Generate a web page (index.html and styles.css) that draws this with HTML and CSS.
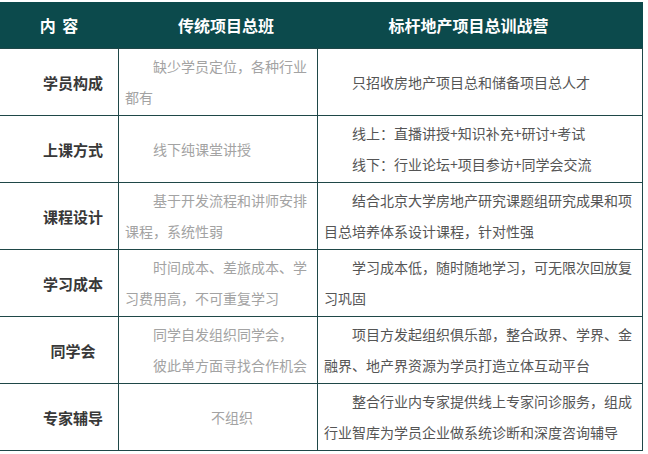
FILE: index.html
```html
<!DOCTYPE html>
<html lang="zh">
<head>
<meta charset="utf-8">
<link rel="stylesheet" href="styles.css">
</head>
<body>
<div class="table">
  <div class="head">
    <div class="hcell h1">内 容</div>
    <div class="hcell h2">传统项目总班</div>
    <div class="hcell h3">标杆地产项目总训战营</div>
  </div>
  <div class="grid">
    <div class="cell c1">学员构成</div>
    <div class="cell c2"><p>缺少学员定位，各种行业都有</p></div>
    <div class="cell c3"><p>只招收房地产项目总和储备项目总人才</p></div>

    <div class="cell c1">上课方式</div>
    <div class="cell c2"><p>线下纯课堂讲授</p></div>
    <div class="cell c3"><p>线上：直播讲授+知识补充+研讨+考试</p><p>线下：行业论坛+项目参访+同学会交流</p></div>

    <div class="cell c1">课程设计</div>
    <div class="cell c2"><p>基于开发流程和讲师安排课程，系统性弱</p></div>
    <div class="cell c3"><p>结合北京大学房地产研究课题组研究成果和项目总培养体系设计课程，针对性强</p></div>

    <div class="cell c1">学习成本</div>
    <div class="cell c2"><p>时间成本、差旅成本、学习费用高，不可重复学习</p></div>
    <div class="cell c3"><p>学习成本低，随时随地学习，可无限次回放复习巩固</p></div>

    <div class="cell c1">同学会</div>
    <div class="cell c2"><p>同学自发组织同学会，</p><p>彼此单方面寻找合作机会</p></div>
    <div class="cell c3"><p>项目方发起组织俱乐部，整合政界、学界、金融界、地产界资源为学员打造立体互动平台</p></div>

    <div class="cell c1">专家辅导</div>
    <div class="cell c2 center"><p>不组织</p></div>
    <div class="cell c3"><p>整合行业内专家提供线上专家问诊服务，组成行业智库为学员企业做系统诊断和深度咨询辅导</p></div>
  </div>
</div>
</body>
</html>
```

FILE: styles.css
```css
html, body {
  margin: 0;
  padding: 0;
  background: #ffffff;
}
body {
  padding-top: 2px;
  font-family: "Microsoft YaHei", "Noto Sans CJK SC", sans-serif;
}
.table {
  width: 643px;
}
.head {
  display: grid;
  grid-template-columns: 118px 200px 325px;
  height: 46px;
  background: #0c4a4c;
  color: #ffffff;
  font-size: 16px;
  font-weight: bold;
}
.hcell {
  display: flex;
  align-items: center;
  justify-content: center;
}
.h1 { word-spacing: 3px; }
.h2 { padding-left: 16px; }
.h3 { padding-right: 24px; }
.grid {
  display: grid;
  grid-template-columns: 118px 198px 324px;
  grid-auto-rows: 66px;
  gap: 1px;
  background: #1f4748;
  border-top: 1px solid #1f4748;
  border-right: 1px solid #1f4748;
  border-bottom: 1px solid #1f4748;
}
.cell {
  background: #ffffff;
  padding: 0 6px;
  display: flex;
  flex-direction: column;
  justify-content: center;
  font-size: 14px;
  line-height: 31px;
}
.cell p {
  margin: 0;
  text-indent: 28px;
}
.c1 {
  align-items: center;
  text-indent: 28px;
  font-size: 15px;
  font-weight: bold;
  color: #383838;
}
.c2 { color: #a3a3a3; }
.c3 { color: #555555; }
.center p { text-align: center; }
```
